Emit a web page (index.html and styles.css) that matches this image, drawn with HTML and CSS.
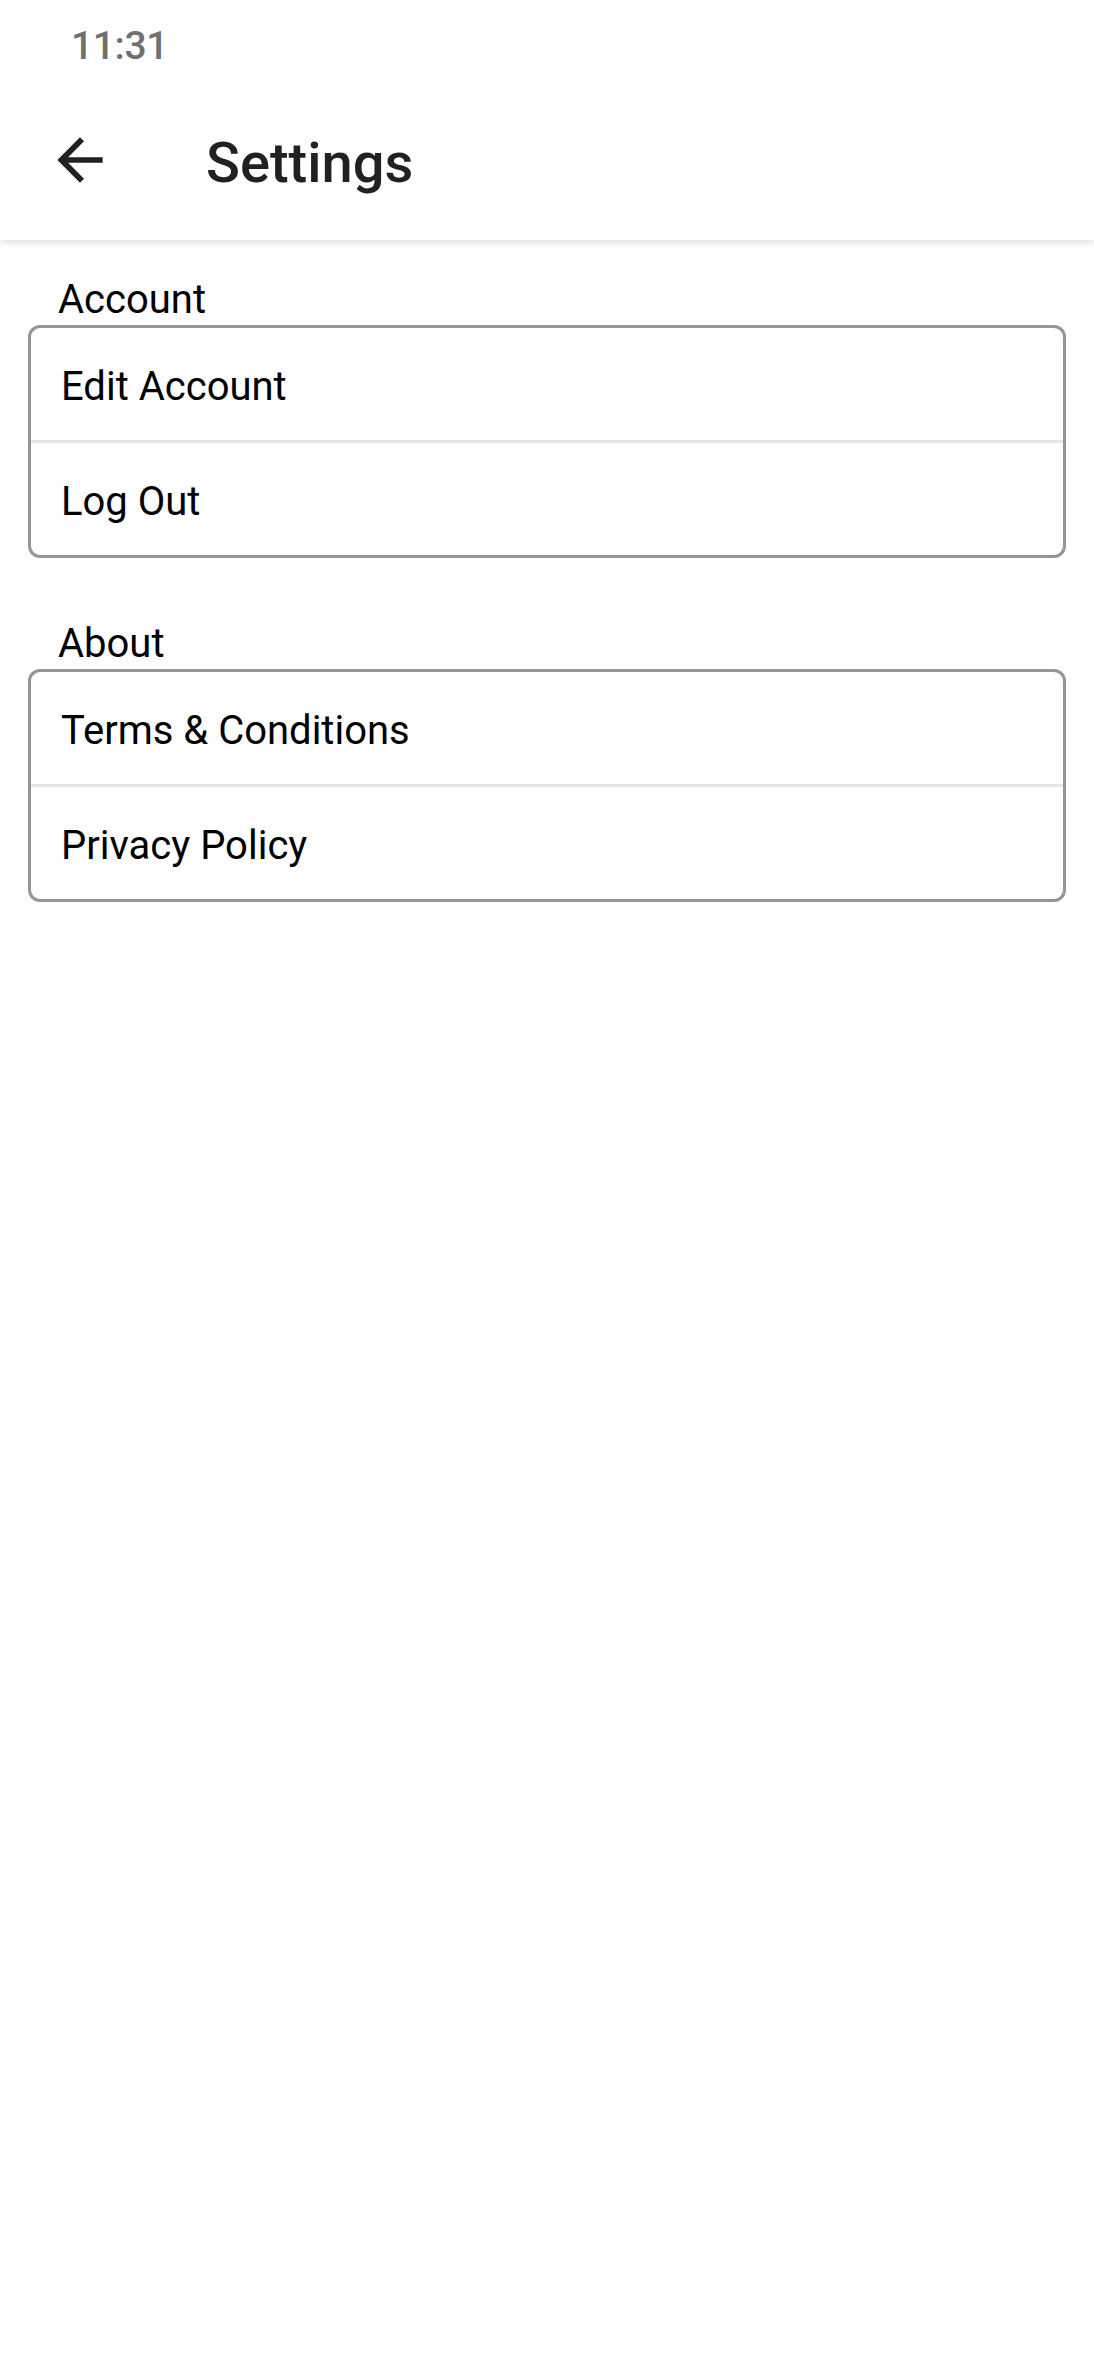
FILE: index.html
```html
<!DOCTYPE html>
<html lang="en">
<head>
<meta charset="utf-8">
<title>Settings</title>
<link rel="stylesheet" href="styles.css">
</head>
<body>
<header class="appbar">
  <div class="status-bar"><span class="clock">11:31</span></div>
  <div class="toolbar">
    <svg class="back-icon" viewBox="0 0 24 24" width="68" height="68" aria-hidden="true">
      <path d="M20 11H7.83l5.59-5.59L12 4l-8 8 8 8 1.41-1.41L7.83 13H20v-2z" fill="#212121"/>
    </svg>
    <h1 class="title">Settings</h1>
  </div>
</header>
<main class="content">
  <section class="group group-account">
    <div class="group-label">Account</div>
    <div class="card">
      <div class="row">Edit Account</div>
      <div class="row">Log Out</div>
    </div>
  </section>
  <section class="group group-about">
    <div class="group-label">About</div>
    <div class="card">
      <div class="row">Terms &amp; Conditions</div>
      <div class="row">Privacy Policy</div>
    </div>
  </section>
</main>
</body>
</html>
```

FILE: styles.css
```css
html, body {
  margin: 0;
  padding: 0;
  background: #ffffff;
}
body {
  font-family: Roboto, "Noto Sans", "Liberation Sans", sans-serif;
  color: #000;
  width: 1094px;
  min-height: 2371px;
}
.appbar {
  position: relative;
  z-index: 1;
  background: #ffffff;
  box-shadow: 0 3px 7px rgba(0, 0, 0, 0.12);
}
.status-bar {
  height: 80px;
  box-sizing: border-box;
  padding: 23px 0 0 71px;
}
.clock {
  font-size: 39px;
  line-height: 47px;
  font-weight: 500;
  color: #707070;
  letter-spacing: -0.4px;
}
.toolbar {
  height: 160px;
  display: flex;
  align-items: center;
  padding-left: 46px;
}
.back-icon {
  display: block;
  flex: none;
}
.title {
  margin: 5px 0 0 92px;
  font-size: 56px;
  line-height: 66px;
  font-weight: 500;
  color: #212121;
}
.content {
  padding: 0 28px;
}
.group-account {
  padding-top: 36px;
}
.group-about {
  padding-top: 62px;
}
.group-label {
  font-size: 40px;
  line-height: 47px;
  padding-left: 30px;
  color: #000;
}
.card {
  margin-top: 2px;
  border: 3px solid #959595;
  border-radius: 12px;
}
.row {
  font-size: 40px;
  line-height: 47px;
  padding: 35px 0 30px 30px;
  color: #000;
}
.row + .row {
  border-top: 3px solid #e6e6e6;
}
```
